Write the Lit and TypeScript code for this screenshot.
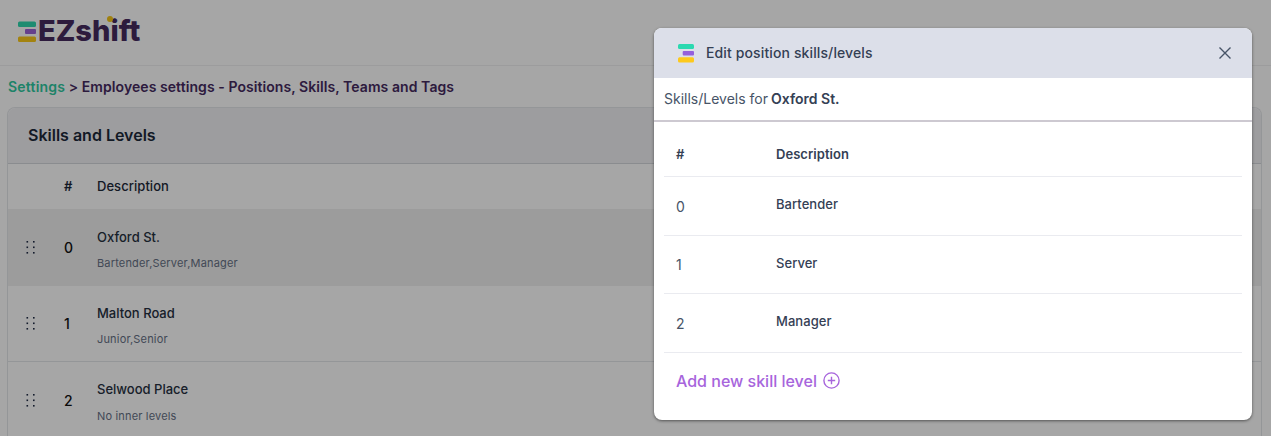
import { LitElement, html, svg, css } from "lit";
import { customElement } from "lit/decorators.js";

const ROWS = [
  { n: "0", t: "Oxford St.", s: "Bartender,Server,Manager", active: true },
  { n: "1", t: "Malton Road", s: "Junior,Senior", active: false },
  { n: "2", t: "Selwood Place", s: "No inner levels", active: false },
];
const LEVELS = ["Bartender", "Server", "Manager"];

const grip = html`<svg class="grip" width="9" height="14" viewBox="0 0 9 14">
  ${[1, 6.5, 12].map((y) => [0.5, 7].map((x) => svg`<rect x="${x}" y="${y}" width="1.6" height="1.6" fill="#1f2a44"></rect>`))}
</svg>`;

@customElement("app-root")
export class AppRoot extends LitElement {
  static styles = css`
    :host { display: block; position: relative; width: 1271px; height: 436px; overflow: hidden; background: #fff; font-family: Inter, "Noto Sans", sans-serif; color: #101828; }
    .topbar { height: 66px; box-sizing: border-box; border-bottom: 1px solid #f0f0f2; display: flex; align-items: center; padding-left: 18px; }
    .logo { display: flex; align-items: center; position: relative; height: 40px; margin-top: -6px; }
    .logo-text { font-size: 29px; line-height: 40px; font-weight: 800; color: #452a5f; letter-spacing: 0; padding-top: 3px; }
    .logo-dot { position: absolute; left: 89px; top: 6px; width: 6px; height: 6px; border-radius: 50%; background: #f5c518; }
    .crumb { font-size: 14px; line-height: 20px; font-weight: 600; color: #452a5f; letter-spacing: 0.07px; padding: 11px 0 0 8px; height: 31px; box-sizing: border-box; }
    .crumb span { color: #2fc9a0; letter-spacing: 0.2px; }
    .card { margin: 10px 9px 0 7px; border: 1px solid #e4e6ea; border-radius: 8px 8px 0 0; border-bottom: 0; }
    .card-head { height: 56px; box-sizing: border-box; padding: 0 0 2px 20px; display: flex; align-items: center; font-size: 16px; font-weight: 600; background: #f1f2f5; border-bottom: 1px solid #d5d7dc; border-radius: 8px 8px 0 0; color: #1d2939; }
    .row { display: grid; grid-template-columns: 56px 33px 1fr; align-items: center; }
    .thead { height: 45px; box-sizing: border-box; padding-bottom: 2px; font-size: 13px; font-weight: 500; color: #1d2939; letter-spacing: 0.05px; }
    .thead .num { font-weight: 600; }
    .trow { height: 76.5px; border-bottom: 1px solid #e4e6ea; box-sizing: border-box; }
    .trow.active { background: #f0f0f0; border-bottom: 0; }
    .grip { margin-left: 18px; display: block; }
    .num { font-size: 13px; font-weight: 500; }
    .trow .num { font-size: 14px; color: #111; padding-top: 1px; }
    .title { font-size: 13px; line-height: 18px; font-weight: 500; color: #26303f; margin-top: 3px; }
    .sub { font-size: 11px; line-height: 14px; color: #667085; margin-top: 10.5px; letter-spacing: 0.17px; }
    .overlay { position: absolute; inset: 0; background: rgba(0, 0, 0, 0.35); }
    .modal { position: absolute; left: 654px; top: 28px; width: 598px; height: 392px; box-sizing: border-box; background: #fff; border-radius: 8px; overflow: hidden; box-shadow: 0 1px 3px rgba(0, 0, 0, 0.5); }
    .m-head { height: 50px; background: #dcdfe9; display: flex; align-items: center; padding: 0 20px 0 24px; gap: 12px; font-size: 14px; font-weight: 500; color: #344054; letter-spacing: 0.12px; }
    .m-head svg.close { margin-left: auto; display: block; }
    .m-title { flex: 0 0 auto; margin-top: -1px; }
    .m-sub { height: 44px; box-sizing: border-box; padding: 0 0 2px 10px; display: flex; align-items: center; border-bottom: 2px solid #cdc9d1; font-size: 14px; color: #475467; white-space: pre; }
    .m-sub b { font-weight: 600; color: #344054; margin-left: -1px; }
    .m-table { margin: 0 10px; }
    .m-row { display: grid; grid-template-columns: 100px 1fr; padding-left: 12px; border-bottom: 1px solid #eaebf0; box-sizing: border-box; font-size: 13px; color: #344054; align-items: center; letter-spacing: 0.05px; }
    .m-row.h { height: 55px; font-weight: 600; padding-top: 9px; }
    .m-row.b { height: 58.5px; font-weight: 500; }
    .m-row.b .i { font-size: 14px; font-weight: 400; color: #475467; padding-top: 1.4px; }
    .m-row.b .d { margin-top: -3.4px; }
    .add { display: flex; align-items: center; gap: 6px; padding: 18px 0 0 22px; font-size: 16px; font-weight: 500; color: #a765dc; }
    .add svg { display: block; }
  `;

  render() {
    return html`
      <div class="topbar">
        <div class="logo">
          <svg width="20" height="24" viewBox="0 0 20 24">
            <rect x="0" y="3.5" width="18" height="5.5" rx="1.5" fill="#2fd8ae"></rect>
            <rect x="7" y="11" width="11" height="5" rx="1" fill="#9b63d8"></rect>
            <rect x="0" y="18.5" width="18" height="5.5" rx="1.5" fill="#fbc91a"></rect>
          </svg>
          <span class="logo-text">EZshift</span>
          <span class="logo-dot"></span>
        </div>
      </div>
      <div class="crumb"><span>Settings</span> &gt; Employees settings - Positions, Skills, Teams and Tags</div>
      <div class="card">
        <div class="card-head">Skills and Levels</div>
        <div class="row thead"><div></div><div class="num">#</div><div>Description</div></div>
        ${ROWS.map(
          (r) => html`<div class="row trow ${r.active ? "active" : ""}">
            <div>${grip}</div>
            <div class="num">${r.n}</div>
            <div><div class="title">${r.t}</div><div class="sub">${r.s}</div></div>
          </div>`
        )}
      </div>
      <div class="overlay"></div>
      <div class="modal">
        <div class="m-head">
          <svg width="16" height="20" viewBox="0 0 16 20">
            <rect x="0" y="1" width="16" height="5" rx="1.5" fill="#2bd9b0"></rect>
            <rect x="4.7" y="8" width="11.3" height="4.5" rx="1" fill="#9560dc"></rect>
            <rect x="0" y="14.3" width="16" height="5.3" rx="1.5" fill="#fdc91c"></rect>
          </svg>
          <span class="m-title">Edit position skills/levels</span>
          <svg class="close" width="14" height="14" viewBox="0 0 14 14" fill="none" stroke="#475467" stroke-width="1.4">
            <path d="M1.5 1.5 L12.5 12.5 M12.5 1.5 L1.5 12.5"></path>
          </svg>
        </div>
        <div class="m-sub">Skills/Levels for <b>Oxford St.</b></div>
        <div class="m-table">
          <div class="m-row h"><div>#</div><div>Description</div></div>
          ${LEVELS.map((l, i) => html`<div class="m-row b"><div class="i">${i}</div><div class="d">${l}</div></div>`)}
        </div>
        <div class="add">
          <span>Add new skill level</span>
          <svg width="17" height="17" viewBox="0 0 17 17" fill="none" stroke="#a765dc" stroke-width="1.4">
            <circle cx="8.5" cy="8.5" r="7.6"></circle>
            <path d="M8.5 4.8 V12.2 M4.8 8.5 H12.2"></path>
          </svg>
        </div>
      </div>
    `;
  }
}
